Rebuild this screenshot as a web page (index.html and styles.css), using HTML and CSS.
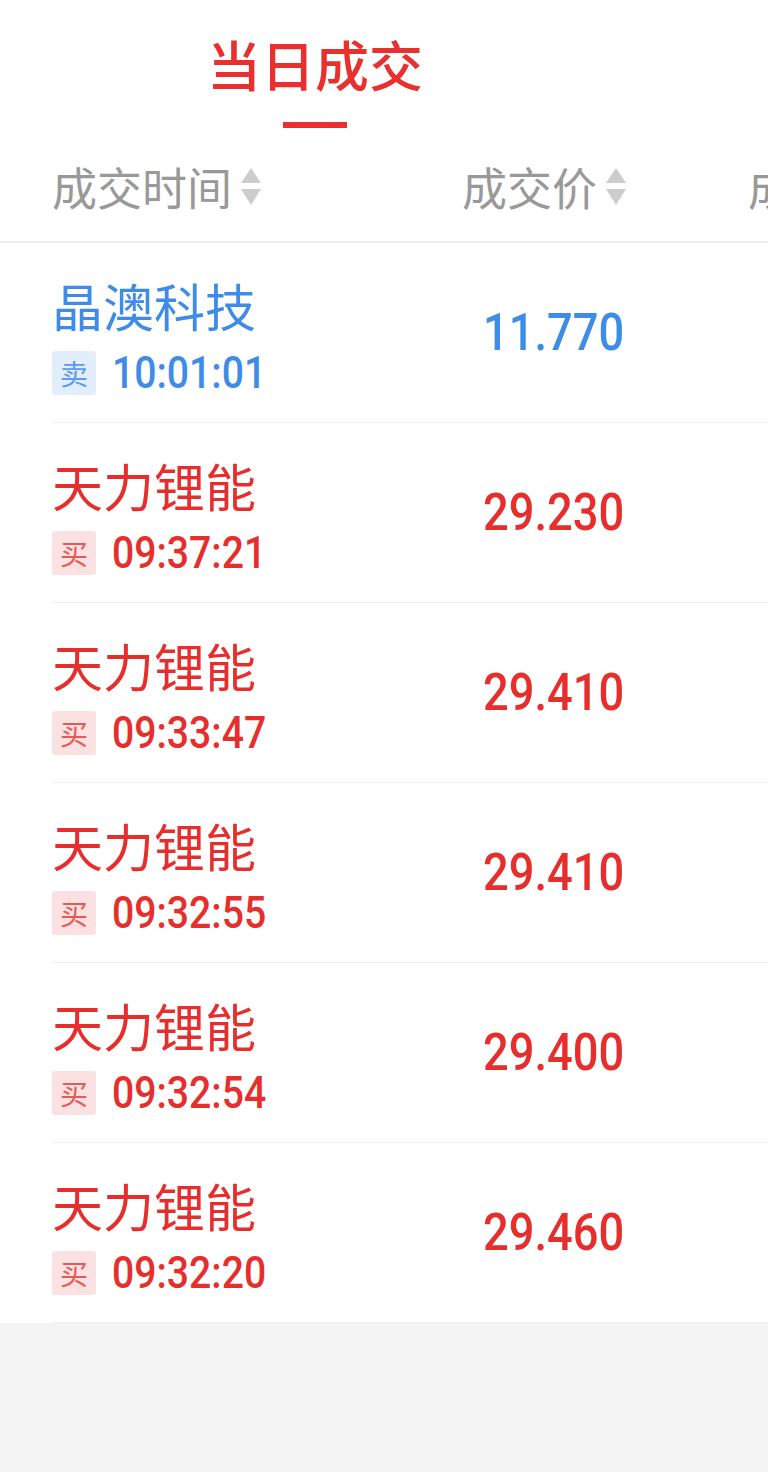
FILE: index.html
```html
<!DOCTYPE html>
<html lang="zh-CN">
<head>
<meta charset="utf-8">
<title>当日成交</title>
<link rel="stylesheet" href="styles.css">
</head>
<body>
<div class="page">
  <div class="tabs">
    <div class="tab active">
      <span class="tab-label">当日成交</span>
      <span class="tab-bar"></span>
    </div>
  </div>
  <div class="table">
    <div class="thead">
      <div class="th c1">成交时间<svg class="sort" viewBox="0 0 20 38"><path d="M10 0 L20 15 L0 15 Z"/><path d="M0 21 L20 21 L10 37 Z"/></svg></div>
      <div class="th c2">成交价<svg class="sort" viewBox="0 0 20 38"><path d="M10 0 L20 15 L0 15 Z"/><path d="M0 21 L20 21 L10 37 Z"/></svg></div>
      <div class="th c3">成交量<svg class="sort" viewBox="0 0 20 38"><path d="M10 0 L20 15 L0 15 Z"/><path d="M0 21 L20 21 L10 37 Z"/></svg></div>
    </div>
    <div class="tbody">
      <div class="row sell">
        <div class="c1">
          <div class="name">晶澳科技</div>
          <div class="meta"><span class="badge">卖</span><span class="time">10:01:01</span></div>
        </div>
        <div class="c2"><span class="price">11.770</span></div>
      </div>
      <div class="row buy">
        <div class="c1">
          <div class="name">天力锂能</div>
          <div class="meta"><span class="badge">买</span><span class="time">09:37:21</span></div>
        </div>
        <div class="c2"><span class="price">29.230</span></div>
      </div>
      <div class="row buy">
        <div class="c1">
          <div class="name">天力锂能</div>
          <div class="meta"><span class="badge">买</span><span class="time">09:33:47</span></div>
        </div>
        <div class="c2"><span class="price">29.410</span></div>
      </div>
      <div class="row buy">
        <div class="c1">
          <div class="name">天力锂能</div>
          <div class="meta"><span class="badge">买</span><span class="time">09:32:55</span></div>
        </div>
        <div class="c2"><span class="price">29.410</span></div>
      </div>
      <div class="row buy">
        <div class="c1">
          <div class="name">天力锂能</div>
          <div class="meta"><span class="badge">买</span><span class="time">09:32:54</span></div>
        </div>
        <div class="c2"><span class="price">29.400</span></div>
      </div>
      <div class="row buy">
        <div class="c1">
          <div class="name">天力锂能</div>
          <div class="meta"><span class="badge">买</span><span class="time">09:32:20</span></div>
        </div>
        <div class="c2"><span class="price">29.460</span></div>
      </div>
    </div>
  </div>
  <div class="rest"></div>
</div>
</body>
</html>
```
FILE: styles.css
```css
* { box-sizing: border-box; }
html, body {
  margin: 0;
  padding: 0;
  background: #f4f4f4;
}
body {
  font-family: "Noto Sans CJK SC", "Noto Sans", sans-serif;
  width: 768px;
  overflow: hidden;
}
.page {
  width: 768px;
  min-height: 1472px;
  display: flex;
  flex-direction: column;
}
.tabs {
  background: #fff;
  height: 130px;
  width: 768px;
  display: flex;
}
.tab {
  width: 630px;
  display: flex;
  flex-direction: column;
  align-items: center;
  padding-top: 33px;
}
.tab-label {
  font-size: 54px;
  line-height: 62px;
  color: #e8302e;
  font-weight: 500;
}
.tab-bar {
  margin-top: 27px;
  width: 64px;
  height: 6px;
  background: #e8302e;
}
.table {
  background: #fff;
  width: 768px;
  overflow: hidden;
}
.thead {
  height: 113px;
  display: flex;
  align-items: center;
  padding-left: 52px;
  border-bottom: 2px solid #ececec;
  white-space: nowrap;
  padding-top: 2px;
}
.th {
  font-size: 45px;
  line-height: 52px;
  color: #999;
  display: flex;
  align-items: center;
  flex-shrink: 0;
}
.sort {
  width: 20px;
  height: 38px;
  margin-left: 9px;
  fill: #cdcdcd;
}
.c1 {
  width: 360px;
  flex-shrink: 0;
}
.c2 {
  width: 214px;
  flex-shrink: 0;
  justify-content: flex-end;
  display: flex;
}
.c3 {
  margin-left: 122px;
}
.row {
  margin-left: 52px;
  height: 180px;
  border-bottom: 1px solid #efefef;
  display: flex;
  align-items: center;
}
.row .c1 {
  display: flex;
  flex-direction: column;
  padding-top: 6px;
}
.name {
  font-size: 51px;
  line-height: 58px;
}
.meta {
  margin-top: 17px;
  display: flex;
  align-items: center;
}
.badge {
  width: 44px;
  height: 44px;
  border-radius: 3px;
  display: flex;
  align-items: center;
  justify-content: center;
  font-size: 28px;
  line-height: 1;
}
.time {
  margin-left: 16px;
  font-family: Roboto, "Liberation Sans", sans-serif;
  font-weight: 500;
  font-size: 44px;
  line-height: 44px;
  display: inline-block;
  transform: scaleX(0.89);
  transform-origin: left center;
}
.price {
  font-family: Roboto, "Liberation Sans", sans-serif;
  font-weight: 500;
  font-size: 52px;
  line-height: 60px;
  display: inline-block;
  transform: scaleX(0.87);
  transform-origin: right center;
  margin-right: 2px;
}
.sell .name, .sell .time, .sell .price { color: #3f8ce8; }
.sell .badge { background: #e3eefc; color: #5d9bec; }
.buy .name, .buy .time, .buy .price { color: #e62f2d; }
.buy .badge { background: #fbe1e1; color: #e55a58; }
.rest {
  flex: 1;
  background: #f4f4f4;
}
```
